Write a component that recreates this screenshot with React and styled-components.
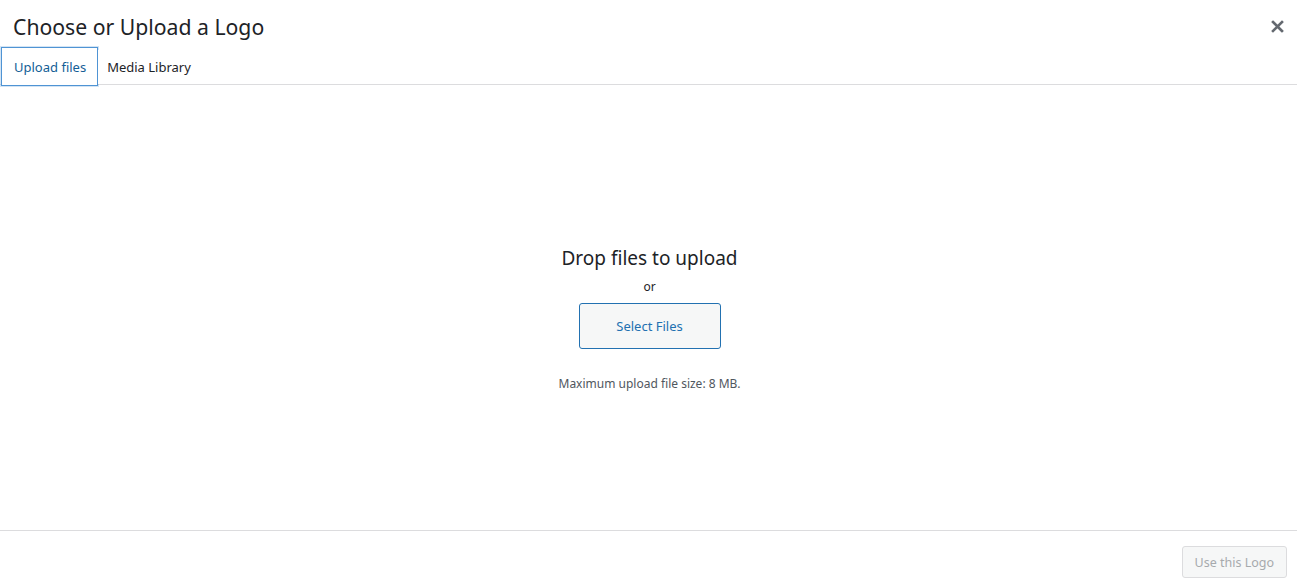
import React from "react";
import styled, { createGlobalStyle } from "styled-components";

const GlobalStyle = createGlobalStyle`
  html, body {
    margin: 0;
    padding: 0;
    background: #fff;
  }
  body {
    font-family: "Noto Sans", "Open Sans", sans-serif;
    color: #3c434a;
  }
`;

const Frame = styled.div`
  display: flex;
  flex-direction: column;
  width: 1297px;
  height: 583px;
  background: #fff;
  overflow: hidden;
`;

const TitleBar = styled.div`
  display: flex;
  align-items: center;
  justify-content: space-between;
  height: 50px;
  padding: 2px 8px 0 13px;
  box-sizing: border-box;
`;

const Title = styled.h1`
  margin: 0;
  font-size: 21.2px;
  font-weight: 400;
  color: #1d2327;
`;

const CloseButton = styled.button`
  display: flex;
  align-items: center;
  justify-content: center;
  width: 24px;
  height: 24px;
  padding: 0;
  border: 0;
  background: none;
  color: #646970;
  cursor: pointer;
`;

const TabBar = styled.div`
  display: flex;
  align-items: stretch;
  height: 34px;
  border-bottom: 1px solid #dcdcde;
  padding-left: 1px;
`;

const Tab = styled.button`
  display: flex;
  align-items: center;
  padding: 0 ${(p) => (p.$active ? "11px" : "10px")} 0 ${(p) => (p.$active ? "12px" : "8px")};
  margin-top: ${(p) => (p.$active ? "-3px" : "0")};
  height: ${(p) => (p.$active ? "39px" : "34px")};
  font-family: inherit;
  font-size: 13px;
  background: #fff;
  border: ${(p) => (p.$active ? "1px solid #4f94d4" : "1px solid transparent")};
  box-shadow: ${(p) => (p.$active ? "0 0 0 1px rgba(79,148,212,0.25)" : "none")};
  color: ${(p) => (p.$active ? "#135e96" : "#1d2327")};
  box-sizing: border-box;
  cursor: pointer;
`;

const Content = styled.div`
  flex: 1;
  display: flex;
  flex-direction: column;
  align-items: center;
  justify-content: center;
  padding: 24px 0 0 2px;
`;

const DropTitle = styled.p`
  margin: 0;
  font-size: 19px;
  color: #1d2327;
  line-height: 26px;
`;

const Or = styled.p`
  margin: 6px 0 6px;
  font-size: 12px;
  color: #1d2327;
  line-height: 20px;
`;

const SelectButton = styled.button`
  width: 142px;
  height: 46px;
  font-family: inherit;
  font-size: 13px;
  color: #2271b1;
  background: #f6f7f7;
  border: 1px solid #2271b1;
  border-radius: 3px;
  cursor: pointer;
`;

const MaxSize = styled.p`
  margin: 25px 0 0;
  font-size: 12px;
  color: #50575e;
  line-height: 20px;
`;

const Toolbar = styled.div`
  display: flex;
  justify-content: flex-end;
  align-items: center;
  height: 52px;
  border-top: 1px solid #dcdcde;
  padding: 0 10px 0 0;
`;

const PrimaryButton = styled.button`
  height: 32px;
  margin-top: 10px;
  padding: 0 12px;
  font-family: inherit;
  font-size: 12.5px;
  color: #a7aaad;
  background: #f6f7f7;
  border: 1px solid #dcdcde;
  border-radius: 3px;
`;

export default function App() {
  return (
    <>
      <GlobalStyle />
      <Frame>
        <TitleBar>
          <Title>Choose or Upload a Logo</Title>
          <CloseButton aria-label="Close dialog">
            <svg width="13" height="13" viewBox="0 0 13 13">
              <path
                d="M2 2 L11 11 M11 2 L2 11"
                stroke="currentColor"
                strokeWidth="2.6"
                strokeLinecap="square"
              />
            </svg>
          </CloseButton>
        </TitleBar>
        <TabBar>
          <Tab $active>Upload files</Tab>
          <Tab>Media Library</Tab>
        </TabBar>
        <Content>
          <DropTitle>Drop files to upload</DropTitle>
          <Or>or</Or>
          <SelectButton>Select Files</SelectButton>
          <MaxSize>Maximum upload file size: 8 MB.</MaxSize>
        </Content>
        <Toolbar>
          <PrimaryButton disabled>Use this Logo</PrimaryButton>
        </Toolbar>
      </Frame>
    </>
  );
}
